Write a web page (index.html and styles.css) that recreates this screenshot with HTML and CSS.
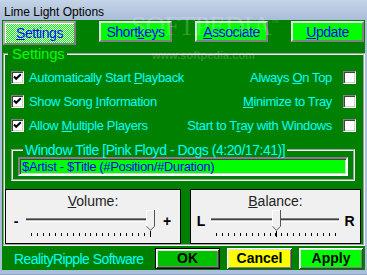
FILE: index.html
```html
<!DOCTYPE html>
<html lang="en">
<head>
  <meta charset="UTF-8" />
  <title>Lime Light Options</title>
  <link rel="stylesheet" href="styles.css">
</head>
<body>
  <div class="window">
    <div class="titlebar">Lime Light Options</div>

    <div class="client">
      <div class="tabs">
        <a class="tab active" href="#"><u>S</u>ettings</a>
        <a class="tab" href="#">Short<u>k</u>eys</a>
        <a class="tab" href="#"><u>A</u>ssociate</a>
        <a class="tab" href="#"><u>U</u>pdate</a>
      </div>

      <fieldset class="group">
        <legend>Settings</legend>
        <div class="options">
          <label class="opt"><span class="box"><svg viewBox="0 0 9 9" width="9" height="9"><polyline points="1,3.5 3.2,5.8 7.8,1.2" fill="none" stroke="#000" stroke-width="2"/></svg></span><span class="txt">Automatically Start <u>P</u>layback</span></label>
          <label class="opt right"><span class="txt">Always <u>O</u>n Top</span><span class="box"></span></label>
          <label class="opt"><span class="box"><svg viewBox="0 0 9 9" width="9" height="9"><polyline points="1,3.5 3.2,5.8 7.8,1.2" fill="none" stroke="#000" stroke-width="2"/></svg></span><span class="txt">Show Song <u>I</u>nformation</span></label>
          <label class="opt right"><span class="txt"><u>M</u>inimize to Tray</span><span class="box"></span></label>
          <label class="opt"><span class="box"><svg viewBox="0 0 9 9" width="9" height="9"><polyline points="1,3.5 3.2,5.8 7.8,1.2" fill="none" stroke="#000" stroke-width="2"/></svg></span><span class="txt">Allow <u>M</u>ultiple Players</span></label>
          <label class="opt right"><span class="txt">Start to T<u>r</u>ay with Windows</span><span class="box"></span></label>
        </div>

        <fieldset class="title-group">
          <legend>Window Title [Pink Floyd - Dogs (4:20/17:41)]</legend>
          <div class="title-input">$Artist - $Title (#Position/#Duration)</div>
        </fieldset>

        <div class="panels">
          <div class="panel">
            <div class="panel-label"><u>V</u>olume:</div>
            <div class="slider">
              <span class="sign">-</span>
              <div class="track-area">
                <div class="track"></div>
                <div class="ticks"></div>
                <div class="thumb" style="--pos:1">
                  <svg viewBox="0 0 9 21" width="9" height="21"><polygon points="0,0 9,0 9,16 4.5,20.5 0,16" fill="#f0f0f0"/><polyline points="0.5,16.5 0.5,0.5 8,0.5" fill="none" stroke="#fff"/><polyline points="8.5,0 8.5,16.2 4.5,20.3 0.5,16.3" fill="none" stroke="#555"/></svg>
                </div>
              </div>
              <span class="sign end">+</span>
            </div>
          </div>
          <div class="panel">
            <div class="panel-label"><u>B</u>alance:</div>
            <div class="slider">
              <span class="sign">L</span>
              <div class="track-area">
                <div class="track"></div>
                <div class="ticks"></div>
                <div class="thumb" style="--pos:0.5">
                  <svg viewBox="0 0 9 21" width="9" height="21"><polygon points="0,0 9,0 9,16 4.5,20.5 0,16" fill="#f0f0f0"/><polyline points="0.5,16.5 0.5,0.5 8,0.5" fill="none" stroke="#fff"/><polyline points="8.5,0 8.5,16.2 4.5,20.3 0.5,16.3" fill="none" stroke="#555"/></svg>
                </div>
              </div>
              <span class="sign end">R</span>
            </div>
          </div>
        </div>
      </fieldset>

      <div class="footer">
        <span class="credit">RealityRipple Software</span>
        <button class="btn default">OK</button>
        <button class="btn cancel">Cancel</button>
        <button class="btn apply">Apply</button>
      </div>
    </div>

    <div class="watermark">SOFTPEDIA<sup>™</sup></div>
    <div class="watermark-url">www.softpedia.com</div>
  </div>
</body>
</html>
```

FILE: styles.css
```css
/* Base */
body { margin:0; width:367px; height:275px; overflow:hidden; font-family:"Liberation Sans", Arial, sans-serif; }
u { text-decoration:underline; text-underline-offset:1px; }

/* Window frame */
.window { position:relative; height:275px; box-sizing:border-box; padding:0 2px 5px; background:#aabfd9; border-bottom:1px solid #8fa6c4; }
.titlebar { height:20px; margin:0 -2px; box-sizing:border-box; padding:5px 0 0 4px; line-height:14px; font-size:12px; color:#000; background:linear-gradient(#c5d4e7, #a9bdd7); }
.client { height:250px; background:#008000; }

/* Tabs */
.tabs { display:flex; align-items:flex-start; gap:23px; height:24px; padding:1px 0 0 1px; }
.tab { width:73px; height:21px; box-sizing:border-box; padding-top:1px; text-align:center; font-size:14px; letter-spacing:-0.45px; line-height:17px; color:#0000ff; text-decoration:none; background:#00ff00; border:2px solid; border-color:#e4e4e4 #808080 #808080 #e4e4e4; }
.tab.active { height:24px; padding-top:2px; border-color:#b0b0b0 #808080 #808080 #b0b0b0; box-shadow:inset 1px 1px #fff; background:repeating-conic-gradient(#00ff00 0 25%, #ffffff 0 50%) 0 0/2px 2px; }

/* Group boxes */
.group { margin:2px 0 0 1px; padding:0; border:2px groove #f2f2f2; min-inline-size:0; }
.group > legend { margin-left:3px; padding:0 2px 0 4px; font-size:15px; letter-spacing:-0.2px; line-height:14px; color:#00ff00; }
.options { display:grid; grid-template-columns:1fr auto; grid-auto-rows:24px; padding:4px 7px 0 6px; }
.opt { display:flex; align-items:center; gap:5px; font-size:13px; letter-spacing:-0.35px; line-height:15px; color:#00ffff; }
.opt.right { justify-content:flex-end; gap:11px; }
.txt { white-space:nowrap; }
.box { flex:none; width:13px; height:13px; box-sizing:border-box; display:flex; align-items:center; justify-content:center; background:#fff; border:1px solid; border-color:#808080 #fff #fff #808080; box-shadow:inset 1px 1px #404040, inset -1px -1px #d4d0c8; }

.title-group { margin:6px 8px 0 6px; padding:0 5px 3px; border:2px groove #f2f2f2; min-inline-size:0; }
.title-group > legend { margin-left:5px; padding:0 2px; font-size:14px; letter-spacing:-0.46px; line-height:14px; color:#00ffff; white-space:nowrap; }
.title-input { height:19px; box-sizing:border-box; padding-left:2px; font-size:13px; letter-spacing:-0.35px; line-height:15px; color:#0000ff; background:#00ff00; border:2px solid; border-color:#808080 #fff #fff #808080; box-shadow:inset 1px 1px #404040, inset -1px -1px #d4d0c8; white-space:nowrap; }

/* Volume / balance */
.panels { display:grid; grid-template-columns:176px 171px; gap:9px; margin-top:8px; }
.panel { height:55px; box-sizing:border-box; background:#f0f0f0; border:1px solid #000; padding-top:3px; }
.panel-label { text-align:center; font-size:14px; line-height:16px; color:#222; }
.slider { display:flex; margin-top:1px; }
.sign { width:20px; margin-top:3px; text-align:center; font-size:14px; font-weight:bold; line-height:16px; color:#000; }
.sign.end { width:auto; flex:1; }
.track-area { position:relative; width:128px; height:28px; }
.track { height:4px; margin-top:8px; box-sizing:border-box; background:#c8c8c8; border-top:1px solid #808080; border-bottom:1px solid #fff; box-shadow:inset 0 1px #404040; }
.ticks { width:120px; height:3px; margin:11px 0 0 5px; background:repeating-linear-gradient(90deg, #000 0 1px, transparent 1px 5.95px); }
.thumb { position:absolute; top:0; left:calc(var(--pos) * 119px + 1px); width:9px; height:21px; }
.thumb svg { display:block; }
.thumb::after { content:''; position:absolute; left:4px; top:21px; width:1px; height:6px; background:#000; }

/* Footer */
.footer { display:flex; align-items:center; gap:7px; height:24px; padding:1px 2px 0 0; box-sizing:border-box; }
.credit { flex:1; padding-left:12px; font-size:14px; letter-spacing:-0.55px; color:#00ffff; }
.btn { width:65px; height:21px; padding:0; font-family:inherit; font-size:14px; font-weight:bold; line-height:17px; color:#000; border:none; box-shadow:inset 1px 1px #fff, inset -1px -1px #404040, inset 2px 2px #e0e0e0, inset -2px -2px #808080; }
.btn.default { background:#00c000; border:1px solid #000; }
.btn.cancel { background:#ffff00; }
.btn.apply { background:#00ff00; width:64px; }

/* Watermark */
.watermark { position:absolute; top:9px; left:131px; font-family:"Liberation Serif", serif; font-size:27px; letter-spacing:-0.6px; line-height:28px; color:rgba(255,255,255,0.22); pointer-events:none; }
.watermark sup { font-size:8px; }
.watermark-url { position:absolute; top:49px; left:152px; font-size:11px; font-weight:bold; color:rgba(255,255,255,0.2); pointer-events:none; }
```
